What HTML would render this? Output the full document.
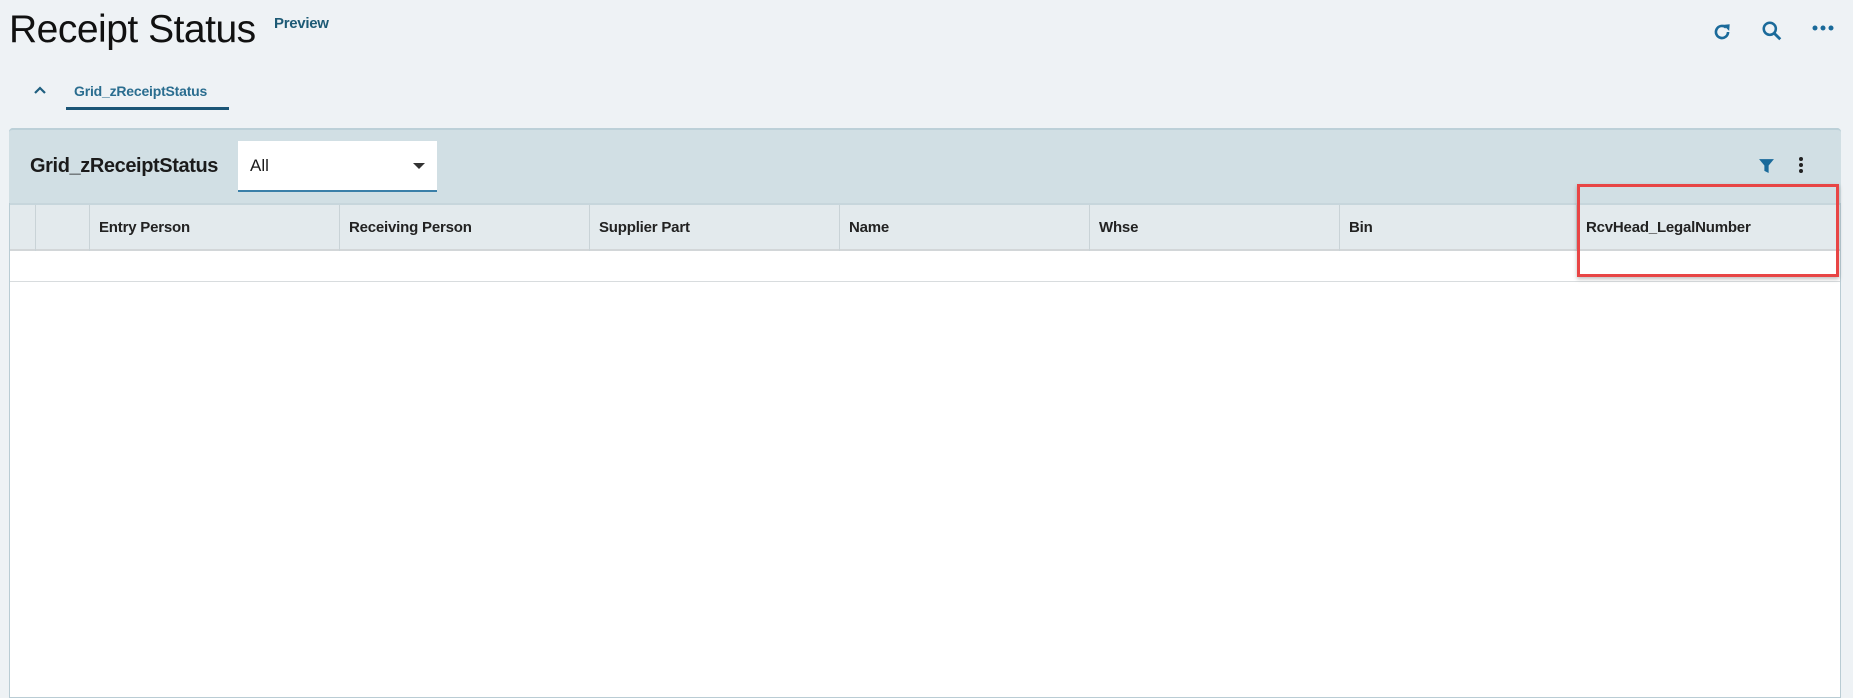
<!DOCTYPE html>
<html><head><style>
*{margin:0;padding:0;box-sizing:border-box}
body{width:1853px;height:688px;background:#eef2f5;font-family:"Liberation Sans",sans-serif;position:relative;overflow:hidden;color:#1b1b1b}
.a{position:absolute}
.title{left:9px;top:8px;font-size:39px;letter-spacing:-0.5px;color:#111}
.prev{left:274px;top:15px;font-size:15px;font-weight:bold;color:#1d5a75;letter-spacing:-0.3px}
.tab{left:74px;top:83px;font-size:14px;font-weight:bold;color:#2a6d8f;letter-spacing:-0.2px}
.ul{left:66px;top:107px;width:163px;height:3px;background:#1b5576}
.panel{left:9px;top:128px;width:1832px;height:570px;background:#fff;border:1px solid #b9ccd4;border-radius:4px 4px 0 0}
.ph{left:9px;top:128px;width:1832px;height:75px;background:#d1dfe4;border-radius:4px 4px 0 0;border-top:2px solid #bcd0d8}
.pt{left:30px;top:155px;font-size:20px;font-weight:bold;color:#1b1b1b;letter-spacing:-0.4px}
.dd{left:238px;top:141px;width:199px;height:51px;background:#fff;border-bottom:2px solid #3a7fa8}
.dd span{position:absolute;left:12px;top:15px;font-size:17px}
.dd i{position:absolute;right:12px;top:22px;border-left:6px solid transparent;border-right:6px solid transparent;border-top:6px solid #333}
.th{left:10px;top:203px;width:1830px;height:48px;background:#e3eaed;border-top:2px solid #c7d6dc;border-bottom:2px solid #d2d6d8}
.sep{position:absolute;top:0;width:1px;height:46px;background:#c9d3d7}
.th b{position:absolute;top:14px;font-size:15px;color:#222;letter-spacing:-0.2px}
.row{left:10px;top:251px;width:1830px;height:31px;background:#fff;border-bottom:1px solid #d8dcde}
.red{left:1577px;top:184px;width:262px;height:93px;border:3px solid #e84545;box-shadow:0 2px 4px rgba(0,0,0,.25)}
</style></head><body>
<div class="a title">Receipt Status</div>
<div class="a prev">Preview</div>
<svg class="a" style="left:33px;top:85px" width="14" height="10" viewBox="0 0 14 10"><path d="M2 8 L7 3 L12 8" fill="none" stroke="#1f5f80" stroke-width="2.2"/></svg>
<div class="a tab">Grid_zReceiptStatus</div>
<div class="a ul"></div>
<svg class="a" style="left:1711px;top:21px" width="22" height="22" viewBox="0 0 20 20"><path d="M15.5 10a5.5 5.5 0 1 1-1.8-4.1" fill="none" stroke="#1a6a9a" stroke-width="2.4"/><path d="M11 3.5 L17 3 L16.5 9 Z" fill="#1a6a9a"/></svg>
<svg class="a" style="left:1761px;top:20px" width="22" height="22" viewBox="0 0 20 20"><circle cx="8" cy="8" r="5.5" fill="none" stroke="#1a6a9a" stroke-width="2.3"/><path d="M12 12 L17.5 17.5" stroke="#1a6a9a" stroke-width="2.6"/></svg>
<svg class="a" style="left:1812px;top:24px" width="22" height="8" viewBox="0 0 22 8"><circle cx="3" cy="4" r="2.5" fill="#1a6a9a"/><circle cx="11" cy="4" r="2.5" fill="#1a6a9a"/><circle cx="19" cy="4" r="2.5" fill="#1a6a9a"/></svg>
<div class="a panel"></div>
<div class="a ph"></div>
<div class="a pt">Grid_zReceiptStatus</div>
<div class="a dd"><span>All</span><i></i></div>
<svg class="a" style="left:1758px;top:157px" width="17" height="17" viewBox="0 0 16 16"><path d="M1 2 H15 L10 8 V15 L6 13 V8 Z" fill="#1a6a9a"/></svg>
<svg class="a" style="left:1797px;top:156px" width="8" height="18" viewBox="0 0 8 18"><circle cx="4" cy="3" r="2" fill="#222"/><circle cx="4" cy="9" r="2" fill="#222"/><circle cx="4" cy="15" r="2" fill="#222"/></svg>
<div class="a th">
<div class="sep" style="left:25px"></div><div class="sep" style="left:79px"></div><div class="sep" style="left:329px"></div><div class="sep" style="left:579px"></div><div class="sep" style="left:829px"></div><div class="sep" style="left:1079px"></div><div class="sep" style="left:1329px"></div><div class="sep" style="left:1566px"></div>
<b style="left:89px">Entry Person</b><b style="left:339px">Receiving Person</b><b style="left:589px">Supplier Part</b><b style="left:839px">Name</b><b style="left:1089px">Whse</b><b style="left:1339px">Bin</b><b style="left:1576px">RcvHead_LegalNumber</b>
</div>
<div class="a row"></div>
<div class="a red"></div>
</body></html>
